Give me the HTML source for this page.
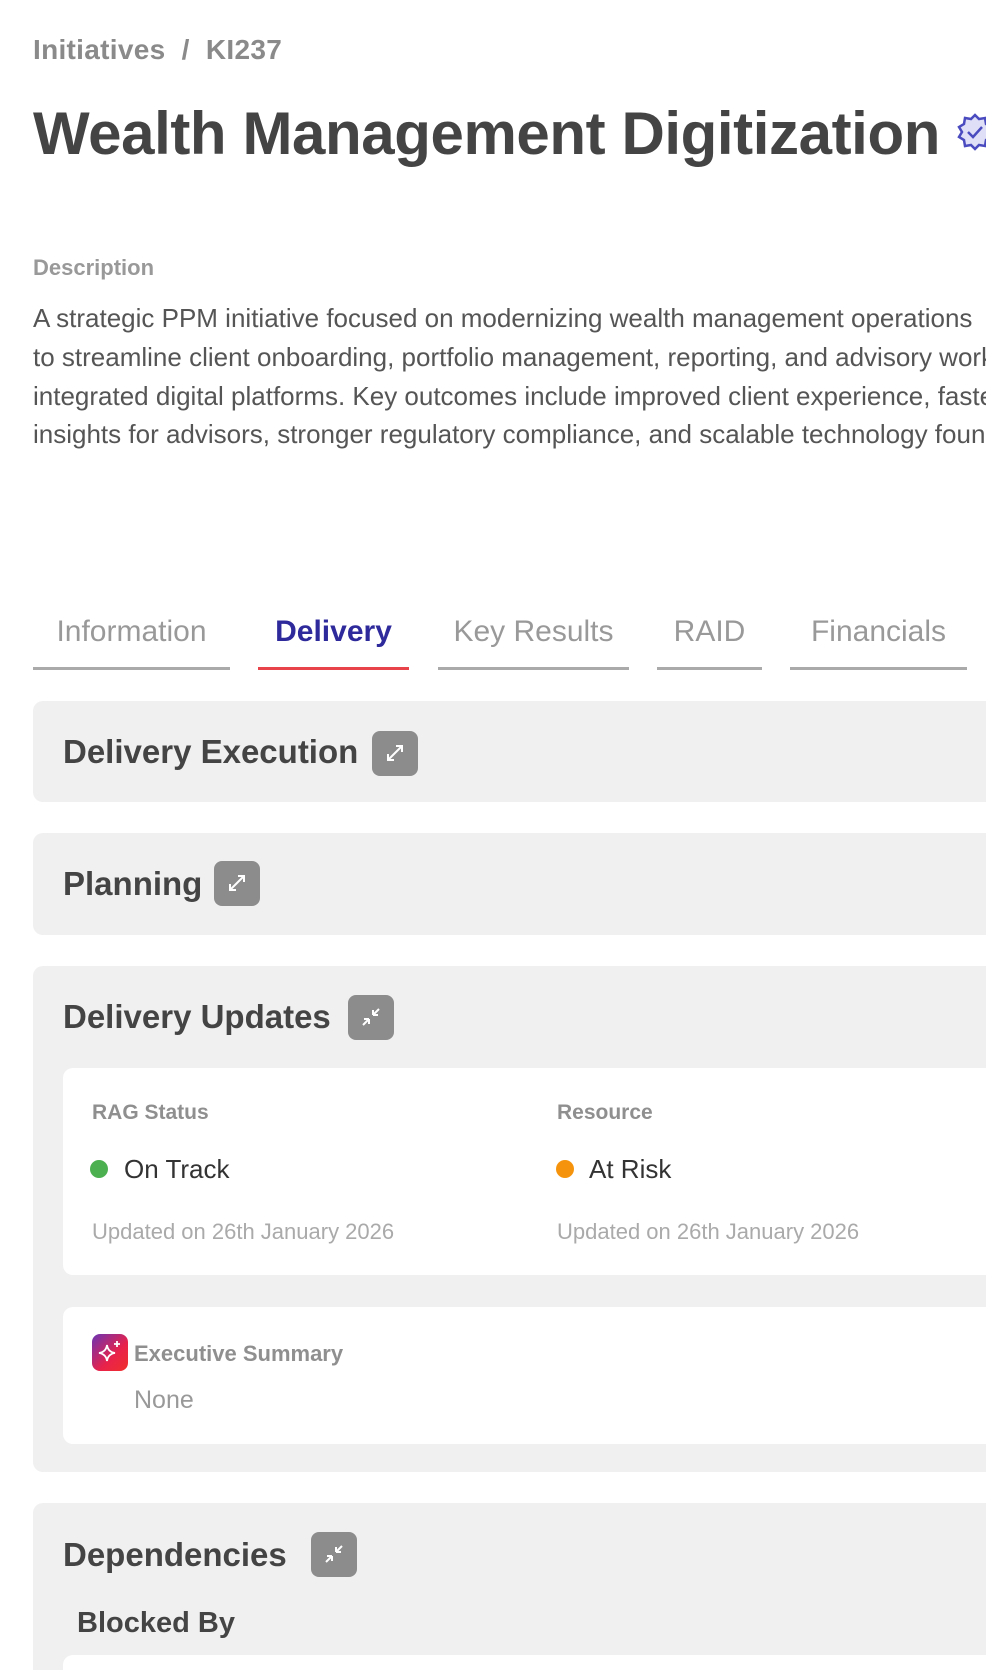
<!DOCTYPE html>
<html><head><meta charset="utf-8"><style>
*{margin:0;padding:0;box-sizing:border-box}
html,body{width:986px;height:1670px;overflow:hidden;background:#fff;font-family:"Liberation Sans",sans-serif}
body{position:relative}
.a{position:absolute;white-space:nowrap}
.card{position:absolute;left:33px;width:953px;background:#f0f0f0;border-radius:10px 0 0 10px}
.white{position:absolute;left:63px;width:923px;background:#fff;border-radius:10px 0 0 10px}
.h{font-weight:bold;color:#444;font-size:33px;line-height:40px}
.btn{position:absolute;width:46px;height:45px;background:#8c8c8c;border-radius:8px}
.tab{position:absolute;top:612px;font-size:30px;color:#999;text-align:center;border-bottom:3px solid #aaa;height:58px;line-height:40px}
.lbl{font-size:21px;font-weight:bold;color:#8f8f8f}
.upd{font-size:22px;color:#aaa}
.clip{position:absolute;left:0;top:0;width:986px;height:1670px;overflow:hidden}
</style></head><body><div class="clip">
<div class="a" style="left:33px;top:34px;font-size:28px;color:#8a8a8a;font-weight:bold;letter-spacing:0.3px">Initiatives &nbsp;/&nbsp; KI237</div>
<div class="a" style="left:33px;top:99px;font-size:60px;font-weight:bold;color:#444;letter-spacing:-0.4px">Wealth Management Digitization</div>
<svg class="a" style="left:955px;top:112px" width="40" height="40" viewBox="0 0 40 40"><path d="M20 3l4 4 6-1 1 6 5 3-3 5 3 5-5 3-1 6-6-1-4 4-4-4-6 1-1-6-5-3 3-5-3-5 5-3 1-6 6 1z" fill="#dfe0f7" stroke="#4b4bc0" stroke-width="2.5"/><path d="M13 20l5 5 9-10" fill="none" stroke="#4b4bc0" stroke-width="2.5"/></svg>
<div class="a" style="left:33px;top:255px;font-size:22px;font-weight:bold;color:#999">Description</div>
<div class="a" style="left:33px;top:299px;font-size:26px;color:#555;line-height:38.8px">A strategic PPM initiative focused on modernizing wealth management operations<br>to streamline client onboarding, portfolio management, reporting, and advisory workflows through<br>integrated digital platforms. Key outcomes include improved client experience, faster<br>insights for advisors, stronger regulatory compliance, and scalable technology foundations.</div>

<div class="tab" style="left:33px;width:197px">Information</div>
<div class="tab" style="left:258px;width:151px;color:#2f2a9c;font-weight:bold;border-color:#e8434b">Delivery</div>
<div class="tab" style="left:438px;width:191px">Key Results</div>
<div class="tab" style="left:657px;width:105px">RAID</div>
<div class="tab" style="left:790px;width:177px">Financials</div>

<div class="card" style="top:701px;height:101px"></div>
<div class="a h" style="left:63px;top:732px">Delivery Execution</div>
<div class="btn" style="left:372px;top:731px"><svg width="46" height="45" viewBox="0 0 46 45"><path d="M16 29l14-14M24 15h6v6M22 29h-6v-6" fill="none" stroke="#fff" stroke-width="2"/></svg></div>

<div class="card" style="top:833px;height:102px"></div>
<div class="a h" style="left:63px;top:864px">Planning</div>
<div class="btn" style="left:214px;top:861px"><svg width="46" height="45" viewBox="0 0 46 45"><path d="M16 29l14-14M24 15h6v6M22 29h-6v-6" fill="none" stroke="#fff" stroke-width="2"/></svg></div>

<div class="card" style="top:966px;height:506px"></div>
<div class="a h" style="left:63px;top:997px">Delivery Updates</div>
<div class="btn" style="left:348px;top:995px"><svg width="46" height="45" viewBox="0 0 46 45"><path d="M15 30l6-6M21 24v5M21 24h-5M31 14l-6 6M25 20v-5M25 20h5" fill="none" stroke="#fff" stroke-width="2"/></svg></div>
<div class="white" style="top:1068px;height:207px"></div>
<div class="a lbl" style="left:92px;top:1101px">RAG Status</div>
<div class="a" style="left:90px;top:1160px;width:18px;height:18px;border-radius:50%;background:#4caf50"></div>
<div class="a" style="left:124px;top:1154px;font-size:26px;color:#333">On Track</div>
<div class="a upd" style="left:92px;top:1219px">Updated on 26th January 2026</div>
<div class="a lbl" style="left:557px;top:1101px">Resource</div>
<div class="a" style="left:556px;top:1160px;width:18px;height:18px;border-radius:50%;background:#f5940c"></div>
<div class="a" style="left:589px;top:1154px;font-size:26px;color:#333">At Risk</div>
<div class="a upd" style="left:557px;top:1219px">Updated on 26th January 2026</div>

<div class="white" style="top:1307px;height:137px"></div>
<div class="a" style="left:92px;top:1334px;width:36px;height:37px;border-radius:8px;background:linear-gradient(135deg,#6a35b5,#e8224a 60%,#f0302c)"><svg width="36" height="37" viewBox="0 0 36 37"><path d="M15 11q1 7 8 8q-7 1-8 8q-1-7-8-8q7-1 8-8z" fill="none" stroke="#fff" stroke-width="1.8"/><path d="M25 7v6M22 10h6" stroke="#fff" stroke-width="1.8"/></svg></div>
<div class="a lbl" style="left:134px;top:1341px;font-size:22px">Executive Summary</div>
<div class="a" style="left:134px;top:1386px;font-size:25px;color:#999">None</div>

<div class="card" style="top:1503px;height:167px;border-radius:10px 0 0 0"></div>
<div class="a h" style="left:63px;top:1535px">Dependencies</div>
<div class="btn" style="left:311px;top:1532px"><svg width="46" height="45" viewBox="0 0 46 45"><path d="M15 30l6-6M21 24v5M21 24h-5M31 14l-6 6M25 20v-5M25 20h5" fill="none" stroke="#fff" stroke-width="2"/></svg></div>
<div class="a" style="left:77px;top:1607px;font-size:29px;font-weight:bold;color:#444">Blocked By</div>
<div class="white" style="top:1655px;height:15px;border-radius:10px 0 0 0"></div>
</div></body></html>
